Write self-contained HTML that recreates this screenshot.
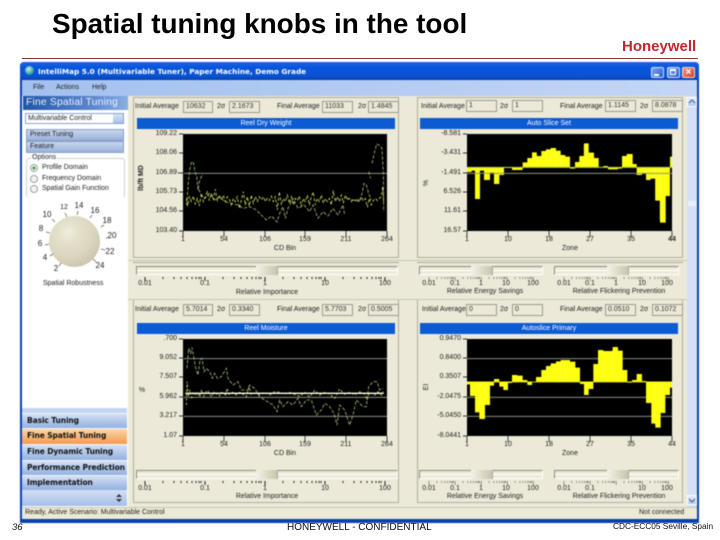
<!DOCTYPE html>
<html><head><meta charset="utf-8"><title>Spatial tuning knobs in the tool</title>
<style>
html,body{margin:0;padding:0;background:#fff}
body{position:relative;width:720px;height:540px;overflow:hidden;font-family:"Liberation Sans",sans-serif}
.a{position:absolute}
.t{position:absolute;white-space:nowrap;font-size:7px;line-height:8px;color:#222}
.c{transform:translateX(-50%)}
.r{transform:translateX(-100%)}
#win{position:absolute;left:0;top:0;width:720px;height:540px;filter:blur(.4px)}
.f{position:absolute;height:10px;border:1px solid #9a9a90;background:#ece9d8;box-sizing:content-box;font-size:7px;line-height:10px;color:#333;padding-left:2px;white-space:nowrap;overflow:hidden}
.gb{position:absolute;border:1px solid #b0ad9c;box-sizing:border-box}
.hd{position:absolute;background:#0b5bd3;color:#fff;text-align:center;font-size:7px;line-height:11px;height:11px}
.sl{position:absolute;height:9px;box-sizing:border-box;border-top:1px solid #8a8a80;border-left:1px solid #8a8a80;border-right:1px solid #fff;border-bottom:1px solid #fff;background:linear-gradient(#ece9d8 0,#ece9d8 3px,#fff 3px,#fff 4px,#ece9d8 4px)}
.th{position:absolute;height:9px;width:21px;background:linear-gradient(90deg,#f4f2e8,#dcd9c6 55%,#c8c5b0);border-right:1px solid #aaa}
.nav{position:absolute;left:22px;width:105px;height:15px;background:linear-gradient(#d3e0f5,#93b1e0);border-top:1px solid #f2f6ff;box-sizing:border-box;font-size:7.5px;font-weight:bold;line-height:14px;padding-left:5px;color:#111;font-family:"DejaVu Sans",sans-serif;letter-spacing:-.1px;white-space:nowrap}
.btn{position:absolute;left:26px;width:98px;height:12px;background:linear-gradient(#c8d6ee,#9ab3dc);border:1px solid #8aa0c8;box-sizing:border-box;font-size:7px;line-height:10px;padding-left:3px;color:#222}
</style></head>
<body>
<div class="t" style="left:52px;top:8px;font-size:27.9px;line-height:32px;font-weight:bold;color:#000">Spatial tuning knobs in the tool</div>
<div class="t" style="left:622px;top:38px;font-size:15px;line-height:18px;font-weight:bold;color:#c4262e">Honeywell</div>
<div class="a" style="left:22px;top:58px;width:676px;height:1px;background:#8f3a30"></div>

<div id="win">
<div class="a" style="left:20px;top:62px;width:679px;height:461px;background:#0a3fb4;border-radius:4px 4px 0 0"></div>
<div class="a" style="left:20px;top:62px;width:679px;height:18px;background:linear-gradient(#1e63de,#0855dd 30%,#0a52d2 80%,#0640b0);border-radius:4px 4px 0 0"></div>
<div class="a" style="left:25px;top:66px;width:9px;height:9px;border-radius:50%;background:radial-gradient(circle at 40% 35%,#c8f0e0,#3aa6a0 60%,#14608a)"></div>
<div class="t" style="left:38px;top:67px;font-family:'DejaVu Sans',sans-serif;font-size:7.3px;line-height:10px;font-weight:bold;color:#fff">IntelliMap 5.0 (Multivariable Tuner), Paper Machine, Demo Grade</div>
<div class="a" style="left:651px;top:67px;width:13px;height:11px;border-radius:2px;background:linear-gradient(135deg,#7fa5ee,#2a5bd0);border:1px solid #cfe0ff;box-sizing:border-box"><div class="a" style="left:2px;top:6px;width:5px;height:2px;background:#fff"></div></div>
<div class="a" style="left:667px;top:67px;width:13px;height:11px;border-radius:2px;background:linear-gradient(135deg,#7fa5ee,#2a5bd0);border:1px solid #cfe0ff;box-sizing:border-box"><div class="a" style="left:2px;top:1px;width:6px;height:6px;border:1px solid #fff;border-top-width:2px;box-sizing:border-box"></div></div>
<div class="a" style="left:682px;top:67px;width:13px;height:11px;border-radius:2px;background:linear-gradient(135deg,#ee9a7c,#d2401c);border:1px solid #f0d8d0;box-sizing:border-box;color:#fff;font-size:10px;line-height:9px;text-align:center;font-weight:bold">×</div>

<!-- menu -->
<div class="a" style="left:22px;top:80px;width:675px;height:16px;background:linear-gradient(90deg,#a3c0ef,#c3d6f6)"></div>
<div class="t" style="left:33px;top:84px">File</div>
<div class="t" style="left:56px;top:84px">Actions</div>
<div class="t" style="left:92px;top:84px">Help</div>

<!-- left panel -->
<div class="a" style="left:22px;top:96px;width:106px;height:411px;background:#fff"></div>
<div class="a" style="left:23px;top:96px;width:105px;height:14px;background:linear-gradient(90deg,#1f55a8,#5f8ad0 70%,#8aaee4)"></div>
<div class="t" style="left:26px;top:97px;font-size:10.3px;line-height:12px;color:#e8f0ff;letter-spacing:.2px">Fine Spatial Tuning</div>
<div class="a" style="left:25px;top:113px;width:99px;height:11px;border:1px solid #8aa0c8;box-sizing:border-box;background:#fff"></div>
<div class="t" style="left:28px;top:115px">Multivariable Control</div>
<div class="a" style="left:113px;top:114px;width:10px;height:9px;background:linear-gradient(#d8e4f8,#a8c0e8)"></div>
<div class="btn" style="top:129px">Preset Tuning</div>
<div class="btn" style="top:141px">Feature</div>
<div class="gb" style="left:26px;top:158px;width:99px;height:40px;border-color:#d0d0c8;border-radius:3px;border-bottom:0"></div>
<div class="t" style="left:31px;top:154px;background:#fff;padding:0 1px">Options</div>
<div class="t" style="left:42px;top:164px">Profile Domain</div>
<div class="t" style="left:42px;top:175px">Frequency Domain</div>
<div class="t" style="left:42px;top:185px">Spatial Gain Function</div>
<div class="t c" style="left:64px;top:204px">12</div><div class="t c" style="left:79px;top:202px;font-size:8px">14</div><div class="t c" style="left:95px;top:207px;font-size:8px">16</div><div class="t c" style="left:107px;top:217px;font-size:8px">18</div><div class="t c" style="left:112px;top:232px;font-size:8px">20</div><div class="t c" style="left:110px;top:248px;font-size:8px">22</div><div class="t c" style="left:100px;top:262px;font-size:8px">24</div><div class="t c" style="left:47px;top:211px;font-size:8px">10</div><div class="t c" style="left:41px;top:225px;font-size:8px">8</div><div class="t c" style="left:40px;top:240px;font-size:8px">6</div><div class="t c" style="left:45px;top:254px;font-size:8px">4</div><div class="t c" style="left:56px;top:265px;font-size:8px">2</div>
<div class="a" style="left:49px;top:216px;width:51px;height:51px;border-radius:50%;background:radial-gradient(circle at 38% 32%,#f1eee0 0,#e4e0cb 22%,#d9d5bd 55%,#bcb8a0 100%)"></div>
<div class="t" style="left:43px;top:280px">Spatial Robustness</div>

<!-- nav -->
<div class="a" style="left:22px;top:408px;width:105px;height:5px;background:#c5d5f0"></div>
<div class="nav" style="top:413px">Basic Tuning</div>
<div class="nav" style="top:428px;height:16px;background:linear-gradient(#fcd7a8,#f59a4c)">Fine Spatial Tuning</div>
<div class="nav" style="top:444px;height:16px">Fine Dynamic Tuning</div>
<div class="nav" style="top:460px">Performance Prediction</div>
<div class="nav" style="top:475px">Implementation</div>
<div class="a" style="left:22px;top:490px;width:105px;height:16px;background:linear-gradient(#d3e0f5,#a5bee8)"></div>

<!-- content -->
<div class="a" style="left:128px;top:96px;width:559px;height:411px;background:#ece9d8"></div>
<div class="a" style="left:687px;top:96px;width:10px;height:411px;background:#d4e0f6"></div>
<div class="a" style="left:687px;top:97px;width:10px;height:10px;background:linear-gradient(#e2eafa,#b4c8ee);border:1px solid #fff;box-sizing:border-box"></div>
<div class="a" style="left:687px;top:495px;width:10px;height:10px;background:linear-gradient(#e2eafa,#b4c8ee);border:1px solid #fff;box-sizing:border-box"></div>
<div class="a" style="left:688px;top:201px;width:8px;height:5px;background:#eaf0fb"></div>

<div class="gb" style="left:133px;top:97px;width:266px;height:161px"></div>
<div class="gb" style="left:417px;top:97px;width:266px;height:161px"></div>
<div class="gb" style="left:133px;top:262px;width:266px;height:36px;border-width:1px 0 0 0"></div>
<div class="gb" style="left:417px;top:262px;width:266px;height:36px;border-width:1px 0 0 0"></div>
<div class="gb" style="left:133px;top:299px;width:266px;height:204px;border-top:0"></div>
<div class="gb" style="left:417px;top:299px;width:266px;height:204px;border-top:0"></div>
<div class="a" style="left:128px;top:260px;width:559px;height:1px;background:#c8c5b4"></div>
<div class="a" style="left:128px;top:299px;width:559px;height:1px;background:#c8c5b4"></div>

<!-- field rows -->
<div class="t" style="left:135px;top:103px">Initial Average</div><div class="f" style="left:183px;top:101px;width:26px">10632</div>
<div class="t" style="left:217px;top:103px">2σ</div><div class="f" style="left:229px;top:101px;width:27px">2.1673</div>
<div class="t" style="left:277px;top:103px">Final Average</div><div class="f" style="left:322px;top:101px;width:27px">11033</div>
<div class="t" style="left:358px;top:103px">2σ</div><div class="f" style="left:368px;top:101px;width:27px">1.4845</div>
<div class="t" style="left:421px;top:103px">Initial Average</div><div class="f" style="left:466px;top:100px;width:27px">1</div>
<div class="t" style="left:500px;top:103px">2σ</div><div class="f" style="left:512px;top:100px;width:27px">1</div>
<div class="t" style="left:560px;top:103px">Final Average</div><div class="f" style="left:605px;top:100px;width:27px">1.1145</div>
<div class="t" style="left:640px;top:103px">2σ</div><div class="f" style="left:652px;top:100px;width:27px">8.0878</div>

<div class="t" style="left:135px;top:306px">Initial Average</div><div class="f" style="left:183px;top:304px;width:26px">5.7014</div>
<div class="t" style="left:217px;top:306px">2σ</div><div class="f" style="left:229px;top:304px;width:27px">0.3340</div>
<div class="t" style="left:277px;top:306px">Final Average</div><div class="f" style="left:322px;top:304px;width:27px">5.7703</div>
<div class="t" style="left:358px;top:306px">2σ</div><div class="f" style="left:368px;top:304px;width:27px">0.5005</div>
<div class="t" style="left:422px;top:306px">Initial Average</div><div class="f" style="left:466px;top:304px;width:27px">0</div>
<div class="t" style="left:500px;top:306px">2σ</div><div class="f" style="left:512px;top:304px;width:27px">0</div>
<div class="t" style="left:560px;top:306px">Final Average</div><div class="f" style="left:605px;top:304px;width:27px">0.0510</div>
<div class="t" style="left:640px;top:306px">2σ</div><div class="f" style="left:652px;top:304px;width:27px">0.1072</div>

<div class="hd" style="left:137px;top:118px;width:258px">Reel Dry Weight</div>
<div class="hd" style="left:420px;top:118px;width:258px">Auto Slice Set</div>
<div class="hd" style="left:137px;top:323px;width:258px">Reel Moisture</div>
<div class="hd" style="left:420px;top:323px;width:258px">Autoslice Primary</div>

<!-- sliders -->
<div class="sl" style="left:136px;top:266px;width:262px"></div><div class="th" style="left:256px;top:266px"></div>
<div class="sl" style="left:419px;top:266px;width:124px"></div><div class="th" style="left:471px;top:266px"></div>
<div class="sl" style="left:554px;top:266px;width:125px"></div><div class="th" style="left:607px;top:266px"></div>
<div class="sl" style="left:136px;top:470px;width:262px"></div><div class="th" style="left:256px;top:470px"></div>
<div class="sl" style="left:419px;top:470px;width:124px"></div><div class="th" style="left:471px;top:470px"></div>
<div class="sl" style="left:554px;top:470px;width:125px"></div><div class="th" style="left:607px;top:470px"></div>

<!-- graphics -->
<svg class="a" style="left:0;top:0" width="720" height="540" viewBox="0 0 720 540">
<defs>
<path id="ticks" fill="none" d="M0 0v4m18-4v2m11-2v2m7-2v2m6-2v2m5-2v2m4-2v2m3-2v2m2-2v2M60 0v4m18-4v2m11-2v2m7-2v2m6-2v2m5-2v2m4-2v2m3-2v2m2-2v2M120 0v4m18-4v2m11-2v2m7-2v2m6-2v2m5-2v2m4-2v2m3-2v2m2-2v2M180 0v4m18-4v2m11-2v2m7-2v2m6-2v2m5-2v2m4-2v2m3-2v2m2-2v2M240 0v4"/>
</defs>
<!-- radios -->
<g fill="#f4f4ee" stroke="#7a8a90" stroke-width=".8"><circle cx="34" cy="168" r="3.5"/><circle cx="34" cy="179" r="3.5"/><circle cx="34" cy="189" r="3.5"/></g>
<circle cx="34" cy="168" r="1.6" fill="#4a9a50"/>
<!-- knob ticks -->
<g stroke="#666" stroke-width=".8"><path d="M65 213l2 4M78 211l-1 4M92 215l-2 3M104 225l-3 2M110 238l-4 0M105 250l-4-1M96 262l-3-3M52 219l3 3M46 232l4 1M45 245l4-1M50 256l3-2M59 266l2-3"/></g>
<!-- plots -->
<rect x="183" y="134" width="204" height="97" fill="#000"/>
<rect x="467" y="134" width="205" height="97" fill="#000"/>
<rect x="183" y="339" width="204" height="97" fill="#000"/>
<rect x="467" y="339" width="205" height="97" fill="#000"/>

<!-- chart 2 bars -->
<g transform="translate(460 130) scale(.33333)">
<path fill="#ffff10" d="M21 112V126H35V122H45V207H60V122H72V150H90V128H102V162H118V135H132V114H156V120H188V112ZM188 112V97H202V84H216V67H230V78H244V63H258V58H272V54H288V62H302V75H316V80H330V112ZM330 112V116H345V112ZM345 112V96H358V78H372V40H386V68H402V84H416V112ZM430 112V108H444V112ZM444 112V118H474V116H486V112ZM486 112V78H500V72H518V102H530V112ZM530 112V135H546V130H558V150H572V146H586V212H600V278H617V198H630V112ZM630 112V80H636V112Z"/>
<path stroke="#ffffa0" stroke-width="1.5" opacity=".6" d="M230 70V110M258 62V110M272 58V110M288 66V110M302 80V110M372 45V110M586 115V210M600 115V270"/>
<path stroke="#a8c850" stroke-width="3" d="M21 112H636"/>
<path stroke="#909088" stroke-width="3" d="M21 130H636"/>
</g>

<!-- chart 4 bars -->
<g transform="translate(460 335) scale(.33333)">
<path stroke="#8c8c84" stroke-width="3" d="M21 71H636M21 187H636M21 244H636"/>
<path fill="#ffff10" d="M21 140V148H30V183H45V232H58V252H75V210H90V152H102V140ZM102 140V132H118V140ZM118 140V155H130V165H144V144H156V140ZM156 140V120H172V122H188V135H202V140ZM202 140V150H216V140ZM228 140V126H244V105H258V93H272V85H288V79H302V75H330V80H346V98H360V140ZM360 140V147H372V180H386V162H400V140ZM400 140V87H414V45H430V48H458V36H474V47H488V105H502V140ZM502 140V143H516V140ZM516 140V135H530V117H546V138H558V140ZM558 140V204H574V266H586V278H602V234H616V180H630V158H636V140Z"/>
<path stroke="#ffffa0" stroke-width="1.5" opacity=".6" d="M58 145V225M75 145V205M272 90V136M302 80V136M316 80V136M430 50V136M458 42V136M586 145V270M602 145V230"/>
<path stroke="#ffff10" stroke-width="2" d="M21 141H636"/>
</g>

<!-- chart 1 -->
<g transform="translate(178 130) scale(.33333)" fill="none">
<path stroke="#909088" stroke-width="3" d="M17 130H627"/>
<path stroke="#9db878" stroke-width="2.6" stroke-dasharray="10 5" d="M26 225L31 158 35 120 41 95 46 98 50 120 56 140 60 180 64 155 70 140 74 132M62 178L70 195 80 205 95 190 110 210 125 200 140 215 160 220 180 225 195 235 215 230 235 240 250 255 265 270 280 258 297 276 305 250 315 230 322 265 330 235 345 205 360 235 378 225 395 245 405 225 420 265 435 245 450 258 465 235 480 255 495 225 500 255M505 205L525 210 545 215 552 190 558 160 565 165 572 190 580 210M572 125L578 145M582 100L590 65 596 42 607 48 612 55 616 130 617 245"/>
<path stroke="#d8e660" stroke-width="2.4" stroke-dasharray="9 6" d="M25 205L29 228 34 200 40 215 46 198 52 222 58 205 64 228 70 190 76 215 82 200 88 185 94 212 100 190 106 208 112 178 118 212 124 195 130 210 136 195 142 215 148 200 154 208 160 225 166 205 172 215 178 200 184 235 190 210 196 185 202 225 208 200 214 228 220 195 226 220 232 200 238 215 244 200 250 210 256 200 262 215 268 205 274 212 280 198 286 215 292 200 298 240 304 185 310 225 316 205 322 215 328 195 334 220 340 200 346 225 352 205 358 212 364 198 370 230 376 205 382 215 388 195 394 225 400 200 406 186 412 225 418 205 424 215 430 195 436 220 442 205 448 215 454 205 460 225 466 182 472 215 478 200 484 215 490 195 496 220 502 195 508 210 514 205 520 215 526 208 532 212 538 205 544 215 550 200 556 212 562 205 568 232 574 205 580 225 586 212 592 205 598 212 604 205 610 200 614 170 617 215"/>
</g>

<!-- chart 3 -->
<g transform="translate(178 335) scale(.33333)" fill="none">
<path stroke="#8c8c84" stroke-width="3" d="M17 71H627M17 187H627M17 244H627"/>
<path stroke="#9db878" stroke-width="2.6" stroke-dasharray="10 5" d="M27 100L32 40 38 55 42 38 48 70 52 95 60 120 66 75 72 70 78 110 85 100 95 110 103 130 110 115 118 130 130 125 145 100 150 130 165 150 180 140 190 165 210 165 215 150 230 160 245 185 260 195 285 210 297 230 305 195 315 215 330 200 345 210 360 190 370 215 385 195 400 195 415 240 430 225 440 205 455 215 468 235 477 270 485 210 500 225 515 270 525 240 535 195 555 215 565 215 572 155 585 140 597 140 605 165 615 160"/>
<path stroke="#d8e660" stroke-width="2.4" stroke-dasharray="7 6" d="M25 210L27 140 31 185 36 165 41 188 47 170 53 182 59 172 65 186 71 164 77 184 83 172 89 166 95 178 101 186 107 170 113 180 119 174 125 182 131 172 137 176 143 180 147 160 153 178 165 172 175 180 185 172 195 178 205 185 213 155 219 178 230 174 245 178 260 172 275 180 290 170 305 172 320 178 335 172 350 178 365 184 380 172 395 186 410 166 425 180 440 172 455 178 470 190 485 162 500 178 515 172 530 180 545 170 560 178 567 195 574 172 590 180 600 170 612 182 617 165"/>
<path stroke="#fffff0" stroke-width="4" d="M22 175H617"/>
</g>

<!-- axes -->
<g stroke="#333" stroke-width=".9" fill="none">
<path d="M179 134h4M179 153h4M178 173h5M179 192h4M179 211h4M179 231h4M183 231v6M224 231v6M265 231v6M305 231v6M346 231v6M387 231v6"/>
<path d="M463 134h4M463 153h4M463 173h4M463 192h4M463 211h4M463 231h4M467 231v6M508 231v6M549 231v6M590 231v6M631 231v6M672 231v6"/>
<path d="M179 339h4M179 358h4M179 377h4M179 397h4M179 416h4M179 436h4M183 436v6M224 436v6M265 436v6M305 436v6M346 436v6M387 436v6"/>
<path d="M463 339h4M463 358h4M463 377h4M463 397h4M463 416h4M463 436h4M467 436v6M508 436v6M549 436v6M590 436v6M631 436v6M672 436v6"/>
</g>
<!-- slider ticks -->
<g stroke="#222" stroke-width="1">
<use href="#ticks" x="145" y="277"/>
<use href="#ticks" x="145" y="481"/>
<use href="#ticks" transform="translate(429 277) scale(.435 1)"/>
<use href="#ticks" transform="translate(429 481) scale(.435 1)"/>
<use href="#ticks" transform="translate(564 277) scale(.435 1)"/>
<use href="#ticks" transform="translate(564 481) scale(.435 1)"/>
</g>
<path d="M116 497l3-3 3 3zM116 499l3 3 3-3z" fill="#333"/>
<path d="M689 103l3-3 3 3M689 499l3 3 3-3" fill="none" stroke="#3a5a9a" stroke-width="1"/>
</svg>

<!-- y labels -->
<div class="t r" style="left:177px;top:130px">109.22</div><div class="t r" style="left:177px;top:149px">108.06</div><div class="t r" style="left:177px;top:169px">106.89</div><div class="t r" style="left:177px;top:188px">105.73</div><div class="t r" style="left:177px;top:207px">104.56</div><div class="t r" style="left:177px;top:227px">103.40</div>
<div class="t r" style="left:461px;top:130px">-8.581</div><div class="t r" style="left:461px;top:149px">-3.431</div><div class="t r" style="left:461px;top:169px">-1.491</div><div class="t r" style="left:461px;top:188px">6.526</div><div class="t r" style="left:461px;top:207px">11.61</div><div class="t r" style="left:461px;top:227px">16.57</div>
<div class="t r" style="left:177px;top:335px">.700</div><div class="t r" style="left:177px;top:354px">9.052</div><div class="t r" style="left:177px;top:373px">7.507</div><div class="t r" style="left:177px;top:393px">5.962</div><div class="t r" style="left:177px;top:412px">3.217</div><div class="t r" style="left:177px;top:432px">1.07</div>
<div class="t r" style="left:461px;top:335px">0.9470</div><div class="t r" style="left:461px;top:354px">0.8400</div><div class="t r" style="left:461px;top:373px">0.3507</div><div class="t r" style="left:461px;top:393px">-2.0475</div><div class="t r" style="left:461px;top:412px">-5.0450</div><div class="t r" style="left:461px;top:432px">-8.0441</div>
<div class="t c" style="left:142px;top:178px;transform:translate(-50%,-50%) rotate(-90deg);font-weight:bold">lb/ft MD</div>
<div class="t c" style="left:427px;top:183px;transform:translate(-50%,-50%) rotate(-90deg)">%</div>
<div class="t c" style="left:142px;top:387px">%</div>
<div class="t c" style="left:427px;top:387px;transform:translate(-50%,-50%) rotate(-90deg)">EI</div>

<!-- x labels -->
<div class="t c" style="left:183px;top:236px">1</div><div class="t c" style="left:224px;top:236px">54</div><div class="t c" style="left:265px;top:236px">106</div><div class="t c" style="left:305px;top:236px">159</div><div class="t c" style="left:346px;top:236px">211</div><div class="t c" style="left:387px;top:236px">264</div>
<div class="t c" style="left:285px;top:245px">CD Bin</div>
<div class="t c" style="left:467px;top:236px">1</div><div class="t c" style="left:508px;top:236px">10</div><div class="t c" style="left:549px;top:236px">18</div><div class="t c" style="left:590px;top:236px">27</div><div class="t c" style="left:631px;top:236px">35</div><div class="t c" style="left:672px;top:236px;font-weight:bold">44</div>
<div class="t c" style="left:570px;top:245px">Zone</div>
<div class="t c" style="left:183px;top:441px">1</div><div class="t c" style="left:224px;top:441px">54</div><div class="t c" style="left:265px;top:441px">106</div><div class="t c" style="left:305px;top:441px">159</div><div class="t c" style="left:346px;top:441px">211</div><div class="t c" style="left:387px;top:441px">264</div>
<div class="t c" style="left:285px;top:450px">CD Bin</div>
<div class="t c" style="left:467px;top:441px">1</div><div class="t c" style="left:508px;top:441px">10</div><div class="t c" style="left:549px;top:441px">18</div><div class="t c" style="left:590px;top:441px">27</div><div class="t c" style="left:631px;top:441px">35</div><div class="t c" style="left:672px;top:441px">44</div>
<div class="t c" style="left:570px;top:450px">Zone</div>

<!-- slider labels -->
<div class="t c" style="left:145px;top:280px">0.01</div><div class="t c" style="left:205px;top:280px">0.1</div><div class="t c" style="left:265px;top:280px">1</div><div class="t c" style="left:325px;top:280px">10</div><div class="t c" style="left:385px;top:280px">100</div>
<div class="t c" style="left:267px;top:289px">Relative Importance</div>
<div class="t c" style="left:429px;top:280px">0.01</div><div class="t c" style="left:455px;top:280px">0.1</div><div class="t c" style="left:481px;top:280px">1</div><div class="t c" style="left:506px;top:280px">10</div><div class="t c" style="left:533px;top:280px">100</div>
<div class="t c" style="left:485px;top:288px">Relative Energy Savings</div>
<div class="t c" style="left:564px;top:280px">0.01</div><div class="t c" style="left:590px;top:280px">0.1</div><div class="t c" style="left:616px;top:280px">1</div><div class="t c" style="left:642px;top:280px">10</div><div class="t c" style="left:667px;top:280px">100</div>
<div class="t c" style="left:619px;top:288px">Relative Flickering Prevention</div>

<div class="t c" style="left:145px;top:485px">0.01</div><div class="t c" style="left:205px;top:485px">0.1</div><div class="t c" style="left:265px;top:485px">1</div><div class="t c" style="left:325px;top:485px">10</div><div class="t c" style="left:385px;top:485px">100</div>
<div class="t c" style="left:267px;top:493px">Relative Importance</div>
<div class="t c" style="left:429px;top:485px">0.01</div><div class="t c" style="left:455px;top:485px">0.1</div><div class="t c" style="left:481px;top:485px">1</div><div class="t c" style="left:506px;top:485px">10</div><div class="t c" style="left:533px;top:485px">100</div>
<div class="t c" style="left:485px;top:493px">Relative Energy Savings</div>
<div class="t c" style="left:564px;top:485px">0.01</div><div class="t c" style="left:590px;top:485px">0.1</div><div class="t c" style="left:642px;top:485px">10</div><div class="t c" style="left:667px;top:485px">100</div>
<div class="t c" style="left:619px;top:493px">Relative Flickering Prevention</div>

<!-- status -->
<div class="a" style="left:22px;top:507px;width:675px;height:12px;background:#ece9d8;border-top:1px solid #c8c5b4;box-sizing:border-box"></div>
<div class="t" style="left:25px;top:509px">Ready, Active Scenario: Multivariable Control</div>
<div class="t" style="left:639px;top:509px">Not connected</div>
</div>

<div class="t" style="left:12px;top:522px;font-size:9.5px;line-height:11px;font-style:italic;color:#111">36</div>
<div class="t" style="left:287px;top:522px;font-size:10px;line-height:11px;color:#111">HONEYWELL - CONFIDENTIAL</div>
<div class="t" style="left:613px;top:521px;font-size:8.3px;line-height:10px;color:#111">CDC-ECC05 Seville, Spain</div>
</body></html>
